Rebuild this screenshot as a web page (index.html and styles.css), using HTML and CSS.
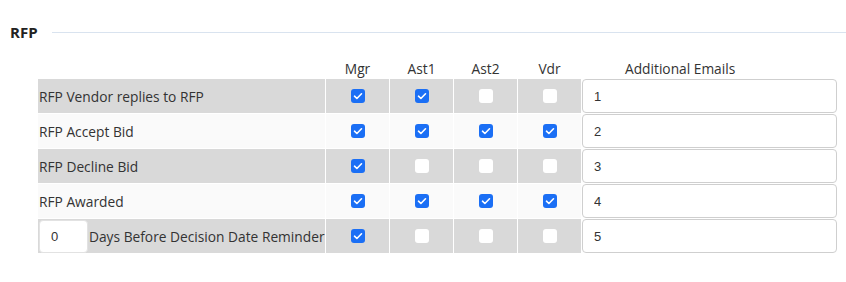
FILE: index.html
```html
<!DOCTYPE html>
<html lang="en">
<head>
    <meta charset="UTF-8">
    <meta name="viewport" content="width=device-width, initial-scale=1.0">
    <title>RFP Notifications</title>
    <link rel="stylesheet" href="styles.css">
</head>
<body>
    <div class="section">
        <div class="section-title"><span>RFP</span></div>

        <table class="notify-table">
            <thead>
                <tr>
                    <th class="label-head"></th>
                    <th class="check-head">Mgr</th>
                    <th class="check-head">Ast1</th>
                    <th class="check-head">Ast2</th>
                    <th class="check-head">Vdr</th>
                    <th class="emails-head">Additional Emails</th>
                </tr>
            </thead>
            <tbody>
                <tr class="row-dark">
                    <td class="label">RFP Vendor replies to RFP</td>
                    <td class="check"><input type="checkbox" class="box" checked></td>
                    <td class="check"><input type="checkbox" class="box" checked></td>
                    <td class="check"><input type="checkbox" class="box"></td>
                    <td class="check"><input type="checkbox" class="box"></td>
                    <td class="email"><input type="text" class="email-input" value="1"></td>
                </tr>
                <tr class="row-light">
                    <td class="label">RFP Accept Bid</td>
                    <td class="check"><input type="checkbox" class="box" checked></td>
                    <td class="check"><input type="checkbox" class="box" checked></td>
                    <td class="check"><input type="checkbox" class="box" checked></td>
                    <td class="check"><input type="checkbox" class="box" checked></td>
                    <td class="email"><input type="text" class="email-input" value="2"></td>
                </tr>
                <tr class="row-dark">
                    <td class="label">RFP Decline Bid</td>
                    <td class="check"><input type="checkbox" class="box" checked></td>
                    <td class="check"><input type="checkbox" class="box"></td>
                    <td class="check"><input type="checkbox" class="box"></td>
                    <td class="check"><input type="checkbox" class="box"></td>
                    <td class="email"><input type="text" class="email-input" value="3"></td>
                </tr>
                <tr class="row-light">
                    <td class="label">RFP Awarded</td>
                    <td class="check"><input type="checkbox" class="box" checked></td>
                    <td class="check"><input type="checkbox" class="box" checked></td>
                    <td class="check"><input type="checkbox" class="box" checked></td>
                    <td class="check"><input type="checkbox" class="box" checked></td>
                    <td class="email"><input type="text" class="email-input" value="4"></td>
                </tr>
                <tr class="row-dark">
                    <td class="label">
                        <div class="days">
                            <input type="text" class="days-input" value="0">
                            <span>Days Before Decision Date Reminder</span>
                        </div>
                    </td>
                    <td class="check"><input type="checkbox" class="box" checked></td>
                    <td class="check"><input type="checkbox" class="box"></td>
                    <td class="check"><input type="checkbox" class="box"></td>
                    <td class="check"><input type="checkbox" class="box"></td>
                    <td class="email"><input type="text" class="email-input" value="5"></td>
                </tr>
            </tbody>
        </table>
    </div>
</body>
</html>
```

FILE: styles.css
```css
body {
    margin: 0;
    font-family: "Open Sans", "Noto Sans", sans-serif;
    font-size: 13.75px;
    color: #333;
    background: #fff;
}

.section {
    padding: 23px 0 0 10px;
}

.section-title {
    display: flex;
    align-items: center;
    gap: 14px;
    height: 18px;
    font-size: 15px;
    font-weight: bold;
    color: #222;
}

.section-title::after {
    content: "";
    flex: 1;
    height: 1px;
    background: #d9e3ef;
}

.notify-table {
    margin: 17px 0 0 27px;
    border-collapse: separate;
    border-spacing: 1px;
}

.notify-table th {
    font-weight: normal;
    height: 18px;
    padding: 0;
    color: #333;
}

.label-head {
    width: 287px;
}

.check-head {
    width: 63px;
    text-align: center;
}

.emails-head {
    width: 255px;
    text-align: left;
    padding-left: 43px !important;
    box-sizing: border-box;
}

.notify-table td {
    height: 34px;
    padding: 0;
}

.row-dark .label,
.row-dark .check {
    background: #d9d9d9;
}

.row-light .label,
.row-light .check {
    background: #fafafa;
}

.label {
    padding-left: 1px !important;
    white-space: nowrap;
}

.check {
    text-align: center;
}

.box {
    appearance: none;
    display: block;
    margin: 0 auto;
    width: 14px;
    height: 14px;
    border-radius: 3px;
    background: #fff;
}

.box:checked {
    background: #1b6ff5 url("data:image/svg+xml,%3Csvg xmlns='http://www.w3.org/2000/svg' viewBox='0 0 14 14'%3E%3Cpath d='M3.5 7.2l2.4 2.3 4.6-4.7' fill='none' stroke='%23fff' stroke-width='1.6' stroke-linecap='round' stroke-linejoin='round'/%3E%3C/svg%3E") center / 14px 14px no-repeat;
}

.email-input {
    display: block;
    width: 255px;
    height: 34px;
    box-sizing: border-box;
    border: 1px solid #cfcfcf;
    border-radius: 4px;
    padding: 0 11px;
    font-family: "Liberation Sans", Arial, sans-serif;
    font-size: 13px;
    color: #333;
    background: #fff;
}

.days {
    display: flex;
    align-items: center;
    gap: 1px;
}

.days-input {
    width: 49px;
    height: 33px;
    box-sizing: border-box;
    border: 1px solid #e2e2e2;
    border-radius: 4px;
    padding: 0 11px;
    font-family: "Liberation Sans", Arial, sans-serif;
    font-size: 13px;
    color: #333;
    background: #fff;
}
```
